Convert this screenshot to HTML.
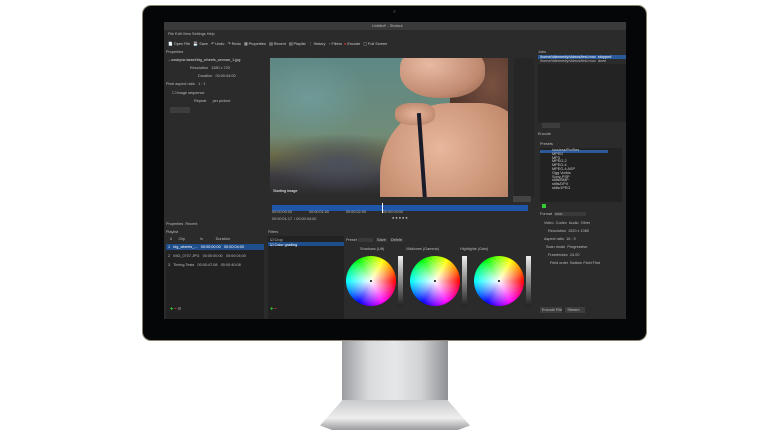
<!DOCTYPE html>
<html><head><meta charset="utf-8"><style>
*{margin:0;padding:0;box-sizing:border-box}
body{width:768px;height:432px;background:#fff;position:relative;overflow:hidden;font-family:"Liberation Sans",sans-serif}
.a{position:absolute}
.t{position:absolute;font-size:3.8px;color:#bbb;white-space:nowrap}
.wheel{position:absolute;width:50px;height:50px;border-radius:50%;background:radial-gradient(circle,#fff 0,rgba(255,255,255,0) 70%),conic-gradient(from 90deg,#f00,#f0f,#00f,#0ff,#0f0,#ff0,#f00)}
.wheel:after{content:"";position:absolute;left:24px;top:24px;width:2px;height:2px;background:#000;border-radius:50%}
.bar{position:absolute;width:5px;height:50px;background:linear-gradient(#eee,#222)}
</style></head><body>
<!-- stand -->
<div class="a" style="left:342px;top:336px;width:106px;height:70px;background:linear-gradient(90deg,#9a9ca0,#d8dadc 25%,#e6e7e8 50%,#cfd1d3 75%,#8e9094)"></div>
<div class="a" style="left:320px;top:400px;width:150px;height:30px;clip-path:polygon(15% 0,85% 0,100% 85%,92% 100%,8% 100%,0 85%);background:linear-gradient(#c9cacc,#eeeeef 60%,#9a9b9d)"></div>
<!-- bezel -->
<div class="a" style="left:142px;top:5px;width:505px;height:336px;background:#050608;border-radius:9px;border:1px solid #8a8470"></div>
<div class="a" style="left:393px;top:10px;width:3px;height:3px;border-radius:50%;background:#222"></div>
<!-- screen -->
<div class="a" style="left:164px;top:22px;width:462px;height:297px;background:#2b2b2b;overflow:hidden">
 <div class="a" style="left:0;top:0;width:462px;height:8px;background:#3a3a3a"></div>
 <div class="t" style="left:208px;top:2px">Untitled* - Shotcut</div>
 <div class="t" style="left:4px;top:10px">File  Edit  View  Settings  Help</div>
 <div class="t" style="left:4px;top:19px;color:#ccc">📄 Open File &nbsp; 💾 Save &nbsp; ↶ Undo &nbsp; ↷ Redo &nbsp; ▦ Properties &nbsp; ▤ Recent &nbsp; ▤ Playlist &nbsp; ⋮ History &nbsp; ↑ Filters &nbsp;<span style="color:#e33">●</span> Encode &nbsp; ▢ Full Screen</div>
 <div class="t" style="left:2px;top:28px">Properties</div>
 <div class="t" style="left:4px;top:36px;color:#ddd">...ossbyrsr/asset/big_wheels_woman_1.jpg</div>
 <div class="t" style="left:26px;top:44px">Resolution &nbsp; 1280 x 720</div>
 <div class="t" style="left:34px;top:52px">Duration &nbsp; 00:00:04:00</div>
 <div class="t" style="left:2px;top:60px">Pixel aspect ratio &nbsp; 1 : 1</div>
 <div class="t" style="left:8px;top:68px">☐ Image sequence</div>
 <div class="t" style="left:30px;top:77px">Repeat &nbsp;&nbsp;&nbsp;&nbsp; per picture</div>
 <div class="a" style="left:6px;top:85px;width:20px;height:6px;background:#3d3d3d"></div>
 <!-- video -->
 <div class="a" style="left:106px;top:36px;width:238px;height:139px;background:radial-gradient(ellipse 60px 40px at 40px 40px,#6f9a98,transparent),radial-gradient(ellipse 70px 30px at 70px 105px,#4a4f5c,transparent),linear-gradient(#5e8886,#708c78 55%,#6a6a48 70%,#3c3a40 85%,#2a2a2a);overflow:hidden">
  <div class="a" style="left:180px;top:-10px;width:70px;height:90px;background:radial-gradient(ellipse at 60% 40%,#7a5040,#3a2a22);border-radius:40%"></div>
  <div class="a" style="left:110px;top:45px;width:150px;height:130px;border-radius:70px 50px 0 0;background:radial-gradient(ellipse at 40% 35%,#e8b79c,#c28a6d 60%,#8a5a44)"></div>
  <div class="a" style="left:130px;top:-15px;width:85px;height:55px;border-radius:45%;background:radial-gradient(ellipse at 35% 40%,#e8baa2,#c08a70 65%,#8a5a45)"></div>
  <div class="a" style="left:125px;top:45px;width:40px;height:22px;border-radius:40%;background:radial-gradient(#e6b49a,#b57d63)"></div>
  <div class="a" style="left:150px;top:55px;width:4px;height:90px;background:#1a1c2a;transform:rotate(-4deg)"></div>
  <div class="t" style="left:3px;top:131px;color:#fff">Starting image</div>
 </div>
 <div class="a" style="left:350px;top:36px;width:20px;height:140px;background:#262626"></div>
 <div class="a" style="left:349px;top:174px;width:18px;height:6px;background:#444"></div>
 <!-- right panels -->
 <div class="t" style="left:374px;top:28px">Jobs</div>
 <div class="a" style="left:374px;top:33px;width:88px;height:4px;background:#2a5a9a"></div>
 <div class="t" style="left:376px;top:33px;color:#fff">/home/ddennedy/videos/test.mov &nbsp;stopped</div>
 <div class="t" style="left:376px;top:37px">/home/ddennedy/videos/test.mov &nbsp;done</div>
 <div class="a" style="left:374px;top:42px;width:88px;height:58px;background:#232323"></div>
 <div class="a" style="left:378px;top:101px;width:18px;height:5px;background:#3d3d3d"></div>
 <div class="t" style="left:374px;top:110px">Encode</div>
 <div class="t" style="left:376px;top:120px">Presets</div>
 <div class="a" style="left:376px;top:126px;width:82px;height:54px;background:#222"></div>
 <div class="a" style="left:376px;top:128px;width:68px;height:3px;background:#2a5a9a"></div>
 <div class="t" style="left:388px;top:127px;line-height:3.8px;color:#ccc">lossless/ProRes<br>MPEG<br>MP3<br>MPEG-2<br>MPEG-4<br>MPEG-4 ASP<br>Ogg Vorbis<br>Sony-PSP<br>stills/BMP<br>stills/DPX<br>stills/JPEG</div>
 <div class="a" style="left:378px;top:182px;width:4px;height:4px;background:#3c3"></div>
 <div class="t" style="left:376px;top:190px">Format &nbsp;<span style="background:#3a3a3a">&nbsp;mov &nbsp;&nbsp;&nbsp;&nbsp;&nbsp;&nbsp;&nbsp;&nbsp;&nbsp;&nbsp;&nbsp;&nbsp;&nbsp;&nbsp;&nbsp;&nbsp;&nbsp;&nbsp;&nbsp;&nbsp;&nbsp;</span></div>
 <div class="t" style="left:380px;top:199px">Video &nbsp;Codec &nbsp;Audio &nbsp;Other</div>
 <div class="t" style="left:384px;top:207px">Resolution &nbsp;1920 x 1080</div>
 <div class="t" style="left:380px;top:215px">Aspect ratio &nbsp;16 : 9</div>
 <div class="t" style="left:382px;top:223px">Scan mode &nbsp;Progressive</div>
 <div class="t" style="left:384px;top:231px">Frames/sec &nbsp;24.00</div>
 <div class="t" style="left:386px;top:239px">Field order &nbsp;Bottom Field First</div>
 <div class="a" style="left:376px;top:285px;width:22px;height:6px;background:#3d3d3d"></div>
 <div class="a" style="left:401px;top:285px;width:20px;height:6px;background:#3d3d3d"></div>
 <div class="t" style="left:378px;top:286px">Encode File &nbsp;&nbsp;&nbsp; Stream</div>
 <!-- timeline -->
 <div class="a" style="left:108px;top:183px;width:256px;height:6px;background:#1f56a8"></div>
 <div class="a" style="left:218px;top:181px;width:1px;height:10px;background:#fff"></div>
 <div class="t" style="left:108px;top:188px">00:00:00:00 &nbsp;&nbsp;&nbsp;&nbsp;&nbsp;&nbsp;&nbsp;&nbsp;&nbsp;&nbsp;&nbsp;&nbsp;&nbsp;&nbsp; 00:00:01:00 &nbsp;&nbsp;&nbsp;&nbsp;&nbsp;&nbsp;&nbsp;&nbsp;&nbsp;&nbsp;&nbsp;&nbsp;&nbsp;&nbsp; 00:00:02:00 &nbsp;&nbsp;&nbsp;&nbsp;&nbsp;&nbsp;&nbsp;&nbsp;&nbsp;&nbsp;&nbsp;&nbsp;&nbsp;&nbsp; 00:00:03:00</div>
 <div class="t" style="left:108px;top:195px">00:00:01:17 &nbsp;/ 00:00:04:00</div>
 <div class="t" style="left:228px;top:194px;color:#ccc">● ● ● ● ●</div>
 <!-- playlist -->
 <div class="t" style="left:2px;top:200px">Properties &nbsp;Recent</div>
 <div class="t" style="left:2px;top:208px">Playlist</div>
 <div class="t" style="left:6px;top:215px">#  &nbsp;&nbsp;&nbsp;&nbsp;&nbsp;Clip &nbsp;&nbsp;&nbsp;&nbsp;&nbsp;&nbsp;&nbsp;&nbsp;&nbsp;&nbsp;&nbsp;&nbsp;&nbsp;In &nbsp;&nbsp;&nbsp;&nbsp;&nbsp;&nbsp;&nbsp;&nbsp;&nbsp;&nbsp;&nbsp;Duration</div>
 <div class="a" style="left:2px;top:222px;width:98px;height:82px;background:#222"></div>
 <div class="a" style="left:2px;top:222px;width:98px;height:6px;background:#1f4e8c"></div>
 <div class="t" style="left:4px;top:223px;color:#fff">1 &nbsp; big_wheels_... &nbsp; 00:00:00:00 &nbsp; 00:00:04:00</div>
 <div class="t" style="left:4px;top:232px">2 &nbsp; IMG_0707.JPG &nbsp; 00:00:00:00 &nbsp; 00:00:04:00</div>
 <div class="t" style="left:4px;top:241px">3 &nbsp; Timing Tests &nbsp; 00:00:47:08 &nbsp; 00:00:40:08</div>
 <div class="t" style="left:6px;top:284px;color:#3c3">✚ <span style="color:#c33">━</span> <span style="color:#aaa">☰</span></div>
 <!-- filters -->
 <div class="t" style="left:104px;top:208px">Filters</div>
 <div class="a" style="left:104px;top:214px;width:76px;height:90px;background:#222"></div>
 <div class="t" style="left:106px;top:215px">☑ Crop</div>
 <div class="a" style="left:104px;top:220px;width:76px;height:4px;background:#1f4e8c"></div>
 <div class="t" style="left:106px;top:220px;color:#fff">☑ Color grading</div>
 <div class="t" style="left:106px;top:284px;color:#3c3">✚ <span style="color:#c33">━</span></div>
 <div class="t" style="left:182px;top:216px">Preset <span style="background:#3a3a3a">&nbsp;&nbsp;&nbsp;&nbsp;&nbsp;&nbsp;&nbsp;&nbsp;&nbsp;&nbsp;&nbsp;&nbsp;&nbsp;&nbsp;</span> &nbsp;&nbsp;<span style="background:#3a3a3a">&nbsp;Save&nbsp;</span> &nbsp;&nbsp;<span style="background:#3a3a3a">&nbsp;Delete&nbsp;</span></div>
 <div class="t" style="left:196px;top:225px">Shadows (Lift) &nbsp;&nbsp;&nbsp;&nbsp;&nbsp;&nbsp;&nbsp;&nbsp;&nbsp;&nbsp;&nbsp;&nbsp;&nbsp;&nbsp;&nbsp;&nbsp;&nbsp;&nbsp;&nbsp; Midtones (Gamma) &nbsp;&nbsp;&nbsp;&nbsp;&nbsp;&nbsp;&nbsp;&nbsp;&nbsp;&nbsp;&nbsp;&nbsp;&nbsp;&nbsp;&nbsp;&nbsp;&nbsp;&nbsp; Highlights (Gain)</div>
 <div class="wheel" style="left:182px;top:234px"></div>
 <div class="bar" style="left:234px;top:234px"></div>
 <div class="wheel" style="left:246px;top:234px"></div>
 <div class="bar" style="left:298px;top:234px"></div>
 <div class="wheel" style="left:310px;top:234px"></div>
 <div class="bar" style="left:362px;top:234px"></div>
</div>
</body></html>
